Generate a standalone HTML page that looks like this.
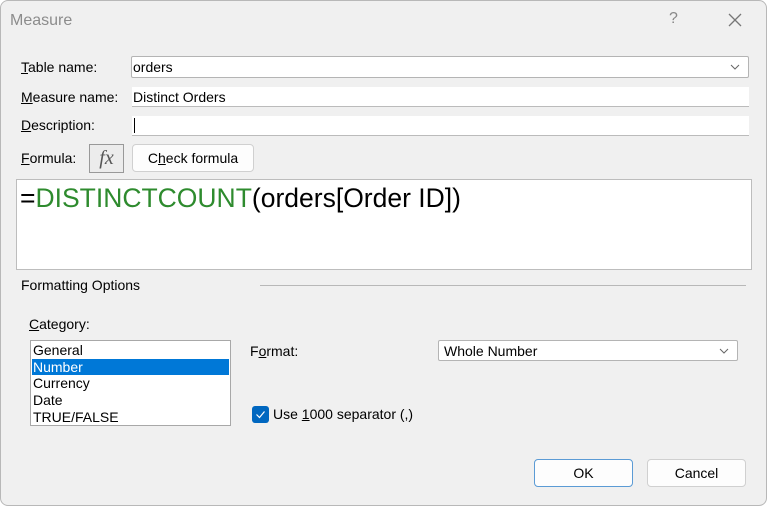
<!DOCTYPE html>
<html><head><style>
*{box-sizing:border-box;margin:0;padding:0}
body{width:768px;height:507px;background:#fff;font-family:"Liberation Sans",sans-serif;font-size:14px;color:#000;position:relative;overflow:hidden}
.dlg{position:absolute;left:0;top:0;width:767px;height:506px;background:#f0f0f0;border:1px solid #b8b8b8;border-radius:8px;overflow:hidden}
.a{position:absolute;white-space:nowrap}
.in{position:absolute;background:#fff}
u{text-decoration:underline}
.btn{position:absolute;background:#fdfdfd;border:1px solid #d0d0d0;border-radius:4px;text-align:center}
</style></head><body>
<div class="dlg">
<div class="a" style="left:9px;top:11px;font-size:16px;color:#8c8c8c">Measure</div>
<div class="a" style="left:668px;top:9px;font-size:16px;color:#888">?</div>
<svg class="a" style="left:726px;top:11px" width="16" height="16"><path d="M2 2L14 14M14 2L2 14" stroke="#777" stroke-width="1.3"/></svg>

<div class="a" style="left:20px;top:58px"><u>T</u>able name:</div>
<div class="in" style="left:130px;top:55px;width:618px;height:22px;border:1px solid #b4b4b4;border-radius:2px"><span class="a" style="left:1px;top:2px">orders</span>
<svg class="a" style="right:8px;top:7px" width="10" height="7"><path d="M1 1L5 5L9 1" stroke="#666" fill="none"/></svg></div>
<div class="a" style="left:20px;top:88px"><u>M</u>easure name:</div>
<div class="in" style="left:131px;top:86px;width:617px;height:20px;border-bottom:1px solid #bbb"><span class="a" style="left:1px;top:2px">Distinct Orders</span></div>
<div class="a" style="left:20px;top:116px"><u>D</u>escription:</div>
<div class="in" style="left:131px;top:115px;width:617px;height:20px;border-bottom:1px solid #bbb"><span class="a" style="left:2px;top:2px;width:1px;height:15px;background:#000"></span></div>
<div class="a" style="left:20px;top:149px"><u>F</u>ormula:</div>
<div class="a" style="left:88px;top:143px;width:35px;height:29px;border:1px solid #999;background:#ececec;font-family:'Liberation Serif',serif;font-style:italic;font-size:20px;color:#555;text-align:center;line-height:26px">fx</div>
<div class="btn" style="left:131px;top:143px;width:122px;height:28px;line-height:26px">C<u>h</u>eck formula</div>
<div class="in" style="left:15px;top:178px;width:736px;height:91px;border:1px solid #bdbdbd"><span class="a" style="left:3px;top:3px;font-size:26.5px">=<span style="color:#2e8b2e">DISTINCTCOUNT</span>(orders[Order ID])</span></div>

<div class="a" style="left:20px;top:276px">Formatting Options</div>
<div class="a" style="left:259px;top:284px;width:486px;height:1px;background:#b8b8b8"></div>
<div class="a" style="left:28px;top:315px"><u>C</u>ategory:</div>
<div class="in" style="left:29px;top:339px;width:201px;height:86px;border:1px solid #a8a8a8">
<div class="a" style="left:2px;top:1px;line-height:17px">General</div>
<div class="a" style="left:1px;top:18px;width:197px;height:16px;background:#0078d7;color:#fff;line-height:16px;padding-left:1px">Number</div>
<div class="a" style="left:2px;top:34px;line-height:17px">Currency</div>
<div class="a" style="left:2px;top:51px;line-height:17px">Date</div>
<div class="a" style="left:2px;top:68px;line-height:17px">TRUE/FALSE</div>
</div>
<div class="a" style="left:249px;top:342px">F<u>o</u>rmat:</div>
<div class="in" style="left:437px;top:339px;width:300px;height:21px;border:1px solid #b4b4b4;border-radius:2px"><span class="a" style="left:5px;top:2px">Whole Number</span>
<svg class="a" style="right:8px;top:7px" width="10" height="7"><path d="M1 1L5 5L9 1" stroke="#666" fill="none"/></svg></div>
<div class="a" style="left:251px;top:405px;width:17px;height:17px;background:#0067c0;border-radius:3px"><svg width="17" height="17"><path d="M4.5 8.5L7.5 11.5L12.5 5.5" stroke="#fff" stroke-width="1.2" fill="none"/></svg></div>
<div class="a" style="left:272px;top:405px">Use <u>1</u>000 separator (,)</div>
<div class="btn" style="left:533px;top:458px;width:99px;height:28px;line-height:26px;border-color:#5b9bd5">OK</div>
<div class="btn" style="left:646px;top:458px;width:99px;height:28px;line-height:26px">Cancel</div>
</div>
</body></html>
